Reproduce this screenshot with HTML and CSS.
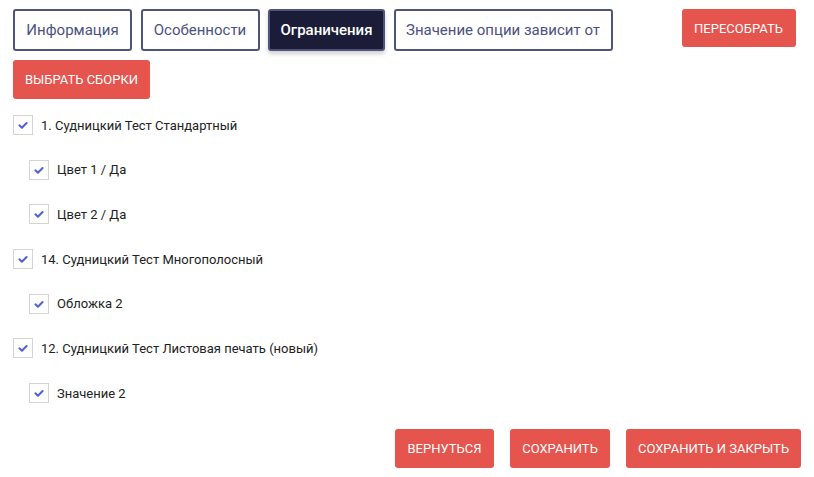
FILE: index.html
```html
<!DOCTYPE html>
<html lang="ru">
<head>
<meta charset="utf-8">
<link rel="stylesheet" href="styles.css">
</head>
<body>
<div class="page">
  <div class="top">
    <div class="tabs">
      <button class="tab t1">Информация</button>
      <button class="tab t2">Особенности</button>
      <button class="tab t3 active">Ограничения</button>
      <button class="tab t4">Значение опции зависит от</button>
    </div>
    <button class="btn rebuild">ПЕРЕСОБРАТЬ</button>
  </div>
  <button class="btn pick">ВЫБРАТЬ СБОРКИ</button>
  <div class="list">
    <div class="row"><span class="cb"><svg viewBox="0 0 20 20"><path d="M6 10.4 L8.8 13 L14 7.8" /></svg></span><span>1. Судницкий Тест Стандартный</span></div>
    <div class="row child"><span class="cb"><svg viewBox="0 0 20 20"><path d="M6 10.4 L8.8 13 L14 7.8" /></svg></span><span>Цвет 1 / Да</span></div>
    <div class="row child"><span class="cb"><svg viewBox="0 0 20 20"><path d="M6 10.4 L8.8 13 L14 7.8" /></svg></span><span>Цвет 2 / Да</span></div>
    <div class="row"><span class="cb"><svg viewBox="0 0 20 20"><path d="M6 10.4 L8.8 13 L14 7.8" /></svg></span><span>14. Судницкий Тест Многополосный</span></div>
    <div class="row child"><span class="cb"><svg viewBox="0 0 20 20"><path d="M6 10.4 L8.8 13 L14 7.8" /></svg></span><span>Обложка 2</span></div>
    <div class="row"><span class="cb"><svg viewBox="0 0 20 20"><path d="M6 10.4 L8.8 13 L14 7.8" /></svg></span><span>12. Судницкий Тест Листовая печать (новый)</span></div>
    <div class="row child"><span class="cb"><svg viewBox="0 0 20 20"><path d="M6 10.4 L8.8 13 L14 7.8" /></svg></span><span>Значение 2</span></div>
  </div>
  <div class="actions">
    <button class="btn back">ВЕРНУТЬСЯ</button>
    <button class="btn save">СОХРАНИТЬ</button>
    <button class="btn saveclose">СОХРАНИТЬ И ЗАКРЫТЬ</button>
  </div>
</div>
</body>
</html>
```
FILE: styles.css
```css
* { box-sizing: border-box; }
html, body { margin: 0; background: #fff; }
body { font-family: Roboto, "Liberation Sans", Arial, sans-serif; color: #222; }
.page { width: 814px; height: 477px; padding: 9px 13px 0 13px; }
.top { display: flex; align-items: flex-start; }
.tabs { display: flex; gap: 8.5px; }
.tab {
  height: 42px;
  padding: 0;
  border: 2px solid #50547a;
  border-radius: 3px;
  background: #fff;
  color: #4b5180;
  font-family: inherit;
  font-size: 15px;
  font-weight: 400;
  white-space: nowrap;
}
.t1 { width: 119px; }
.t2 { width: 119px; }
.t3 { width: 117px; }
.t4 { width: 219px; }
.tab.active {
  background: #1b1c38;
  color: #fff;
  font-weight: 500;
  box-shadow: 0 3px 4px rgba(0,0,0,0.18);
}
.btn {
  background: #e5544d;
  color: #fff;
  border: none;
  border-radius: 3px;
  font-family: inherit;
  font-size: 13px;
  font-weight: 400;
  height: 39px;
  padding: 0;
  white-space: nowrap;
}
.rebuild { margin-left: 69px; width: 114px; height: 38px; }
.pick { display: block; margin-top: 9px; width: 137px; }
.list { display: flex; flex-direction: column; gap: 24.7px; margin-top: 16px; }
.row { display: flex; align-items: center; height: 20px; gap: 8px; font-size: 13px; color: #222; }
.row.child { padding-left: 16px; }
.cb {
  width: 20px; height: 20px;
  border: 1.5px solid #d4d4d4;
  display: flex; align-items: center; justify-content: center;
  flex: none;
}
.cb svg { width: 18px; height: 18px; }
.cb path { fill: none; stroke: #5262d6; stroke-width: 2.3; stroke-linecap: round; stroke-linejoin: round; }
.actions { display: flex; justify-content: flex-end; gap: 16px; margin-top: 26px; }
.back { width: 99px; }
.save { width: 100px; }
.saveclose { width: 175px; }
```
